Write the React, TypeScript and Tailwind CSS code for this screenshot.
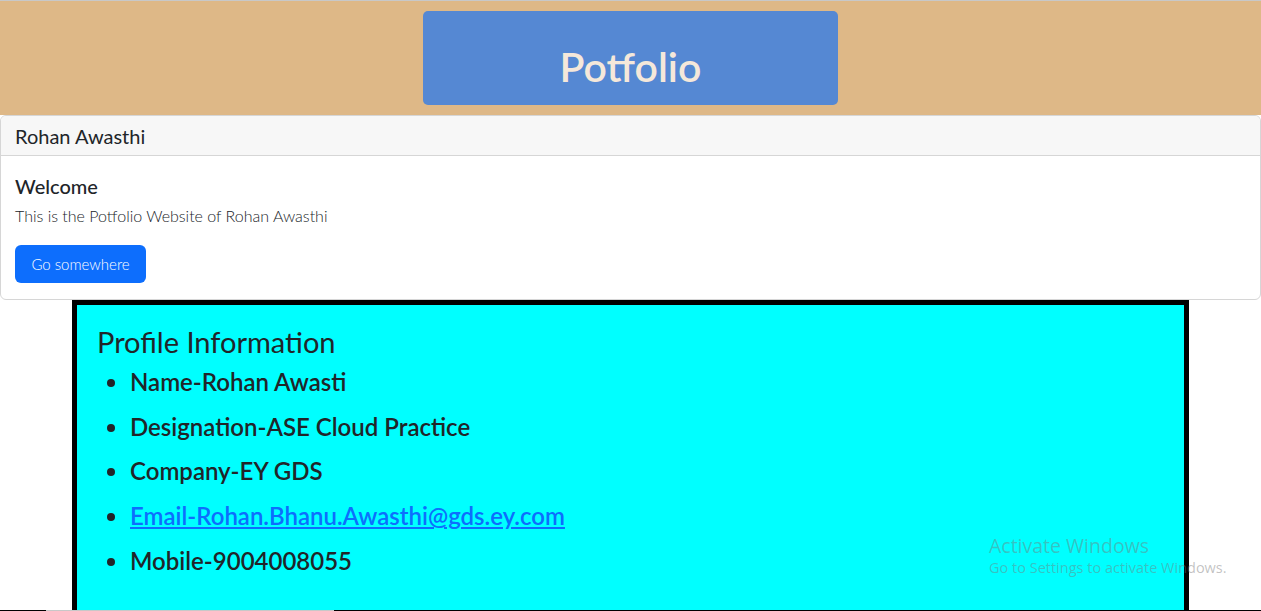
import React from "react";

export default function App() {
  const font = { fontFamily: 'Lato, "Open Sans", sans-serif' };
  return (
    <div className="relative min-h-[611px] bg-white text-[#212529]" style={font}>
      <div className="border-t border-[#c8c8c8] bg-[#deb887] h-[115px] pt-[10px]">
        <div className="mx-auto w-[415px] h-[94px] rounded-[5px] bg-[#5588d3] flex justify-center pt-[32px]">
          <span className="text-[41px] leading-[48px] font-semibold text-[#f5e8da]">Potfolio</span>
        </div>
      </div>

      <div className="border border-[#d6d6d6] rounded-[6px] overflow-hidden">
        <div className="h-[40px] bg-[#f7f7f7] border-b border-[#d6d6d6] flex items-center pl-[14px]">
          <span className="text-[20px] leading-[24px]">Rohan Awasthi</span>
        </div>
        <div className="pl-[14px] pt-[18px] pb-[16px]">
          <h5 className="text-[20px] leading-[24px] font-medium">Welcome</h5>
          <p className="mt-[7px] text-[16px] leading-[22px] font-light">This is the Potfolio Website of Rohan Awasthi</p>
          <button className="mt-[18px] w-[131px] h-[38px] rounded-[6px] bg-[#0d6efd] text-white text-[15px] font-light">
            Go somewhere
          </button>
        </div>
      </div>

      <div className="mx-auto w-[1117px] border-[5px] border-black bg-[#00ffff] pl-[20px] pt-[20px] pb-[40px]">
        <h3 className="text-[29px] leading-[34px]">Profile Information</h3>
        <ul className="list-disc pl-[33px] mt-[1px]">
          <li className="text-[24px] leading-[44.7px] font-semibold">Name-Rohan Awasti</li>
          <li className="text-[24px] leading-[44.7px] font-semibold">Designation-ASE Cloud Practice</li>
          <li className="text-[24px] leading-[44.7px] font-semibold">Company-EY GDS</li>
          <li className="text-[24px] leading-[44.7px] font-semibold">
            <a href="#" className="text-[#0d6efd] underline">Email-Rohan.Bhanu.Awasthi@gds.ey.com</a>
          </li>
          <li className="text-[24px] leading-[44.7px] font-semibold">Mobile-9004008055</li>
        </ul>
      </div>

      <div className="absolute left-[989px] top-[534px] pointer-events-none text-[rgba(120,120,120,0.45)]" style={{ fontFamily: '"Open Sans", sans-serif' }}>
        <div className="text-[19.5px] leading-[24px]">Activate Windows</div>
        <div className="text-[14.5px] leading-[20px]">Go to Settings to activate Windows.</div>
      </div>

      <div className="absolute left-0 top-[610px] w-full h-px bg-black">
        <div className="absolute left-[46px] w-[288px] h-px bg-[#c8c8c8]" />
      </div>
    </div>
  );
}
